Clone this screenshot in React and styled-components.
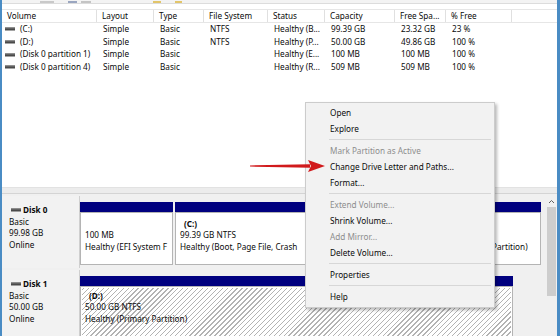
import React from 'react';
import styled, { createGlobalStyle } from 'styled-components';

const GlobalStyle = createGlobalStyle`
  html, body { margin: 0; padding: 0; background: #fff; }
  body {
    font-family: "Noto Sans", "Open Sans", sans-serif;
    font-size: 8.2px;
    color: #0a0a0a;
  }
`;

const Window = styled.div`
  position: relative;
  width: 560px;
  height: 336px;
  overflow: hidden;
  box-sizing: border-box;
  border-left: 2px solid #4a8cc4;
  border-right: 3px solid #4a8cc4;
  display: flex;
  flex-direction: column;
  background: #f0f0f0;
`;

const Toolbar = styled.div`
  height: 3px;
  display: flex;
  align-items: flex-end;
  background: #f3f3f3;
  border-bottom: 1px solid #dcdcdc;
`;

const ToolIcon = styled.span`
  width: ${p => p.w}px;
  height: 2px;
  margin-left: ${p => p.ml}px;
  background: ${p => p.c};
`;

const ListPane = styled.div`
  height: 183px;
  background: #fff;
  padding-top: 5px;
  box-sizing: border-box;
`;

const Grid = styled.div`
  display: grid;
  grid-template-columns: 95px 57px 50px 64px 57px 70px 51px 66px 1fr;
`;

const HeadRow = styled(Grid)`
  height: 14px;
  border-top: 1px solid #e6e6e6;
  border-bottom: 1px solid #e6e6e6;
  box-sizing: border-box;
`;

const HeadCell = styled.div`
  padding-left: 5px;
  line-height: 12px;
  border-right: ${p => (p.last ? 'none' : '1px solid #e0e0e0')};
  white-space: nowrap;
  overflow: hidden;
`;

const DataRow = styled(Grid)`
  height: 12.67px;
  line-height: 12.67px;
`;

const Cell = styled.div`
  padding-left: 6px;
  white-space: nowrap;
  overflow: hidden;
  display: flex;
  align-items: center;
  gap: 5px;
`;

const VolCell = styled(Cell)`
  padding-left: 3px;
`;

const Splitter = styled.div`
  height: 7px;
  background: #ececec;
  border-top: 1px solid #e2e2e2;
  border-bottom: 1px solid #d4d4d4;
  box-sizing: border-box;
`;

const LowerPane = styled.div`
  flex: 1;
  display: flex;
  min-height: 0;
`;

const DiskList = styled.div`
  flex: 1;
  display: flex;
  flex-direction: column;
  gap: 2px;
  padding-top: 2px;
`;

const DiskRow = styled.div`
  display: flex;
  height: ${p => p.h}px;
  flex-shrink: 0;
`;

const DiskLabel = styled.div`
  width: 78px;
  box-sizing: border-box;
  padding: 8px 0 0 7px;
  line-height: 11.4px;
  border-right: 1px solid #cfcfcf;
  background: #f2f2f2;
`;

const DiskName = styled.div`
  font-weight: bold;
  display: flex;
  align-items: center;
  gap: 2px;
  margin-left: 2px;
  height: 12px;
`;

const Partitions = styled.div`
  flex: 1;
  display: flex;
  gap: 2px;
  padding: 6px 0 3px 0;
`;

const Partition = styled.div`
  width: ${p => p.w}px;
  display: flex;
  flex-direction: column;
`;

const Bar = styled.div`
  height: 10px;
  background: #00007f;
  flex-shrink: 0;
`;

const Body = styled.div`
  flex: 1;
  background: ${p => (p.hatched
    ? 'repeating-linear-gradient(135deg, #ffffff 0 2.5px, #b3b3b3 2.5px 3.5px)'
    : '#fff')};
  border: 1px solid #b4b4b4;
  box-shadow: inset 0 0 0 1px #fff;
  padding: ${p => p.pt}px 4px 0 4px;
  line-height: 11.3px;
  white-space: nowrap;
  overflow: hidden;
`;

const VolName = styled.div`
  font-weight: bold;
  padding-left: 4px;
  min-height: 11.3px;
`;

const Scrollbar = styled.div`
  width: 11px;
  margin-left: 3px;
  background: #f0f0f0;
  display: flex;
  flex-direction: column;
  align-items: center;
  padding-top: 5px;
`;

const Thumb = styled.div`
  width: 9px;
  height: 89px;
  background: #cdcdcd;
  margin-top: 3px;
`;

const Menu = styled.div`
  position: absolute;
  left: 303px;
  top: 102px;
  width: 190px;
  box-sizing: border-box;
  padding: 2px 0;
  background: #f2f2f2;
  border: 1px solid #cccccc;
  box-shadow: 2px 2px 3px rgba(0, 0, 0, 0.28);
`;

const MenuItem = styled.div`
  height: 16px;
  line-height: 16px;
  padding-left: 24px;
  color: ${p => (p.disabled ? '#8d8d8d' : '#0a0a0a')};
  white-space: nowrap;
`;

const MenuSep = styled.div`
  height: 1px;
  background: #d7d7d7;
  margin: 2px 3px 3px 23px;
`;

const ArrowSvg = styled.svg`
  position: absolute;
  left: 246px;
  top: 159px;
`;

const DriveIcon = () => (
  <svg width="10" height="4" viewBox="0 0 10 4">
    <rect x="0" y="0.5" width="10" height="3" fill="#4a4a4a" />
    <rect x="0" y="0.5" width="10" height="1" fill="#7a7a7a" />
  </svg>
);

const columns = ['Volume', 'Layout', 'Type', 'File System', 'Status', 'Capacity', 'Free Spa...', '% Free', ''];

const volumes = [
  ['(C:)', 'Simple', 'Basic', 'NTFS', 'Healthy (B...', '99.39 GB', '23.32 GB', '23 %'],
  ['(D:)', 'Simple', 'Basic', 'NTFS', 'Healthy (P...', '50.00 GB', '49.86 GB', '100 %'],
  ['(Disk 0 partition 1)', 'Simple', 'Basic', '', 'Healthy (E...', '100 MB', '100 MB', '100 %'],
  ['(Disk 0 partition 4)', 'Simple', 'Basic', '', 'Healthy (R...', '509 MB', '509 MB', '100 %'],
];

const menu = [
  { t: 'Open' },
  { t: 'Explore' },
  { sep: true },
  { t: 'Mark Partition as Active', d: true },
  { t: 'Change Drive Letter and Paths...' },
  { t: 'Format...' },
  { sep: true },
  { t: 'Extend Volume...', d: true },
  { t: 'Shrink Volume...' },
  { t: 'Add Mirror...', d: true },
  { t: 'Delete Volume...' },
  { sep: true },
  { t: 'Properties' },
  { sep: true },
  { t: 'Help' },
];

export default function App() {
  return (
    <>
      <GlobalStyle />
      <Window>
        <Toolbar>
          <ToolIcon w={14} ml={38} c="#c9c9c9" />
          <ToolIcon w={9} ml={14} c="#9aa6c0" />
          <ToolIcon w={10} ml={4} c="#c4c4c4" />
          <ToolIcon w={8} ml={62} c="#e2c56a" />
          <ToolIcon w={7} ml={14} c="#e2c56a" />
        </Toolbar>
        <ListPane>
          <HeadRow>
            {columns.map((c, i) => (
              <HeadCell key={i} last={i === columns.length - 1}>{c}</HeadCell>
            ))}
          </HeadRow>
          {volumes.map((v, i) => (
            <DataRow key={i}>
              <VolCell><DriveIcon />{v[0]}</VolCell>
              {v.slice(1).map((c, j) => <Cell key={j}>{c}</Cell>)}
              <Cell />
            </DataRow>
          ))}
        </ListPane>
        <Splitter />
        <LowerPane>
          <DiskList>
            <DiskRow h={72}>
              <DiskLabel>
                <DiskName><DriveIcon />Disk 0</DiskName>
                <div>Basic</div>
                <div>99.98 GB</div>
                <div>Online</div>
              </DiskLabel>
              <Partitions>
                <Partition w={93}>
                  <Bar />
                  <Body pt={5}>
                    <VolName />
                    <div>100 MB</div>
                    <div>Healthy (EFI System F</div>
                  </Body>
                </Partition>
                <Partition w={239}>
                  <Bar />
                  <Body pt={5}>
                    <VolName>(C:)</VolName>
                    <div>99.39 GB NTFS</div>
                    <div>Healthy (Boot, Page File, Crash</div>
                  </Body>
                </Partition>
                <Partition w={125}>
                  <Bar />
                  <Body pt={5}>
                    <VolName />
                    <div>509 MB</div>
                    <div>Healthy (Recovery Partition)</div>
                  </Body>
                </Partition>
              </Partitions>
            </DiskRow>
            <DiskRow h={80}>
              <DiskLabel>
                <DiskName><DriveIcon />Disk 1</DiskName>
                <div>Basic</div>
                <div>50.00 GB</div>
                <div>Online</div>
              </DiskLabel>
              <Partitions>
                <Partition w={433}>
                  <Bar />
                  <Body hatched pt={3}>
                    <VolName>(D:)</VolName>
                    <div>50.00 GB NTFS</div>
                    <div>Healthy (Primary Partition)</div>
                  </Body>
                </Partition>
              </Partitions>
            </DiskRow>
          </DiskList>
          <Scrollbar>
            <svg width="7" height="5" viewBox="0 0 7 5">
              <path d="M1 4 L3.5 1.5 L6 4" fill="none" stroke="#606060" strokeWidth="1" />
            </svg>
            <Thumb />
          </Scrollbar>
        </LowerPane>
        <Menu>
          {menu.map((m, i) =>
            m.sep ? <MenuSep key={i} /> : <MenuItem key={i} disabled={m.d}>{m.t}</MenuItem>
          )}
        </Menu>
        <ArrowSvg width="80" height="14" viewBox="0 0 80 14">
          <polygon points="2,6.4 62,5.2 62,8.8 2,7.6" fill="#d11a1c" />
          <polygon points="60,1 77,7 60,13 63,7" fill="#d11a1c" />
        </ArrowSvg>
      </Window>
    </>
  );
}
